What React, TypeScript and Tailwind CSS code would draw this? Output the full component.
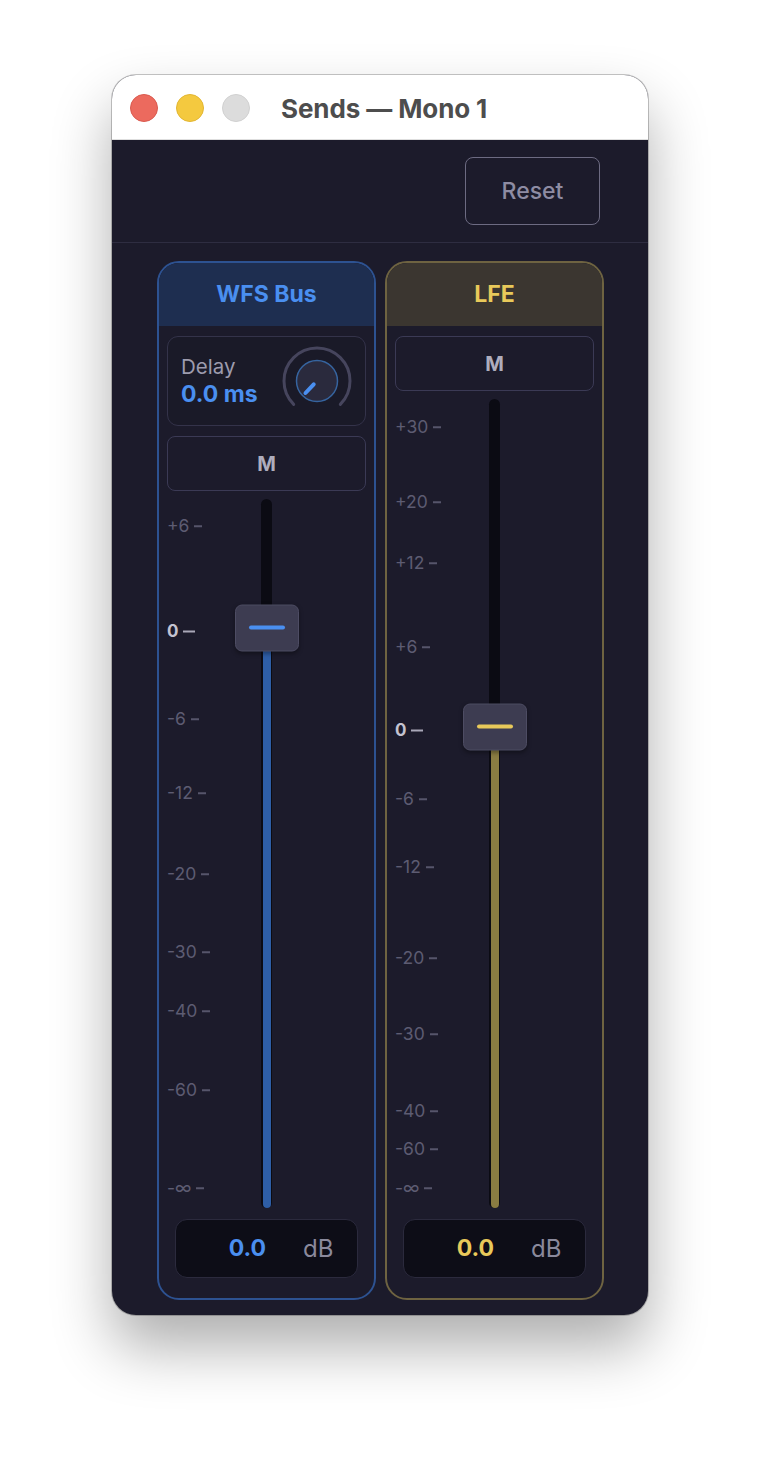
import React from "react";

type Mark = { t: string; y: number; zero?: boolean };

const leftMarks: Mark[] = [
  { t: "+6", y: 525 },
  { t: "0", y: 630, zero: true },
  { t: "-6", y: 718 },
  { t: "-12", y: 792 },
  { t: "-20", y: 873 },
  { t: "-30", y: 951 },
  { t: "-40", y: 1010 },
  { t: "-60", y: 1089 },
  { t: "-∞", y: 1187 },
];

const rightMarks: Mark[] = [
  { t: "+30", y: 426 },
  { t: "+20", y: 501 },
  { t: "+12", y: 562 },
  { t: "+6", y: 646 },
  { t: "0", y: 729, zero: true },
  { t: "-6", y: 798 },
  { t: "-12", y: 866 },
  { t: "-20", y: 957 },
  { t: "-30", y: 1033 },
  { t: "-40", y: 1110 },
  { t: "-60", y: 1148 },
  { t: "-∞", y: 1187 },
];

function Knob() {
  return (
    <svg width="72" height="72" viewBox="0 0 72 72">
      <path
        d="M 12.67 59.33 A 33 33 0 1 1 59.33 59.33"
        fill="none"
        stroke="#46455d"
        strokeWidth="3"
        strokeLinecap="round"
      />
      <circle cx="36" cy="36" r="20.5" fill="#2a2a3d" stroke="#36649f" strokeWidth="1.5" />
      <line x1="32.7" y1="39.3" x2="24.5" y2="48" stroke="#4a8ff0" strokeWidth="4" strokeLinecap="round" />
    </svg>
  );
}

function Fader({
  marks,
  areaTop,
  thumbCenter,
  fill,
  accent,
}: {
  marks: Mark[];
  areaTop: number;
  thumbCenter: number;
  fill: string;
  accent: string;
}) {
  return (
    <div className="relative flex-1 flex justify-center pt-[8px] pb-[11px]">
      {marks.map((m) => (
        <div
          key={m.t}
          className="absolute left-0 -translate-y-1/2 flex items-center leading-none"
          style={{ top: m.y - areaTop }}
        >
          {m.zero ? (
            <>
              <span className="text-[17px] font-bold text-[#c4c3d0]">{m.t}</span>
              <span className="ml-[5px] w-[12px] h-[2px] bg-[#a9a8b8]" />
            </>
          ) : (
            <>
              <span className="text-[17.5px] text-[#5d5c72]">{m.t}</span>
              <span className="ml-[5px] w-[8px] h-[1.5px] bg-[#56556b]" />
            </>
          )}
        </div>
      ))}
      <div className="relative w-[11px] h-full rounded-full bg-[#0b0b13]">
        <div
          className={`absolute left-1/2 -translate-x-1/2 bottom-0 w-[8px] rounded-full ${fill}`}
          style={{ top: thumbCenter }}
        />
        <div
          className="absolute left-1/2 -translate-x-1/2 -translate-y-1/2 w-[64px] h-[47px] rounded-[7px] bg-[#3d3c51] border border-[#4d4c63] flex items-center justify-center shadow-[0_2px_4px_rgba(0,0,0,0.35)]"
          style={{ top: thumbCenter }}
        >
          <div className={`w-[36px] h-[4px] rounded-full ${accent}`} />
        </div>
      </div>
    </div>
  );
}

function ValueBox({ color }: { color: string }) {
  return (
    <div className="mx-[8px] h-[59px] rounded-[12px] bg-[#0d0d17] border border-[#2b2a3d] flex items-center">
      <span className={`w-[90px] text-right text-[23px] font-bold ${color}`}>0.0</span>
      <span className="ml-[37px] text-[24px] text-[#8a899c]">dB</span>
    </div>
  );
}

function MuteButton() {
  return (
    <div className="h-[55px] rounded-[8px] border border-[#3b3a55] flex items-center justify-center text-[20px] font-bold text-[#aeadbd]">
      M
    </div>
  );
}

export default function App() {
  return (
    <div className="w-[760px] h-[1464px] bg-white pt-[75px] pl-[112px] font-[Inter,'Noto_Sans',sans-serif]">
      <div className="w-[536px] h-[1240px] rounded-[24px] overflow-hidden flex flex-col bg-[#1c1b2b] shadow-[0_0_0_1px_rgba(0,0,0,0.22),0_32px_60px_rgba(0,0,0,0.32)]">
        {/* Title bar */}
        <div className="h-[65px] shrink-0 bg-white border-b border-[#dedede] flex items-center pl-[18px] pt-[2px]">
          <div className="w-[28px] h-[28px] rounded-full bg-[#ec6a5e] border border-[#d95a4f]" />
          <div className="ml-[18px] w-[28px] h-[28px] rounded-full bg-[#f4c93f] border border-[#e2b632]" />
          <div className="ml-[18px] w-[28px] h-[28px] rounded-full bg-[#dcdcdc] border border-[#d0d0d0]" />
          <div className="ml-[31px] text-[26px] font-bold text-[#4d4d4d] tracking-[-0.1px]">Sends — Mono 1</div>
        </div>

        {/* Toolbar */}
        <div className="h-[103px] shrink-0 border-b border-[#2e2d41] flex items-center justify-end pr-[48px]">
          <button className="w-[135px] h-[68px] rounded-[8px] border-[1.5px] border-[#6d6b82] text-[23px] font-medium text-[#8e8ca3]">
            Reset
          </button>
        </div>

        {/* Panels */}
        <div className="flex-1 grid grid-cols-[219px_219px] gap-[9px] pl-[45px] pt-[18px] pb-[15px]">
          {/* WFS Bus */}
          <div className="rounded-[22px] border-2 border-[#2d5291] overflow-hidden flex flex-col bg-[#1c1b2b]">
            <div className="h-[63px] shrink-0 bg-[#1e2e50] flex items-center justify-center text-[23px] font-bold text-[#4a8ff0]">
              WFS Bus
            </div>
            <div className="flex-1 flex flex-col px-[8px] pt-[10px] pb-[20px]">
              <div className="h-[90px] rounded-[11px] border border-[#34334a] bg-[#1a1a28] flex items-center justify-between pl-[13px] pr-[12px]">
                <div className="flex flex-col">
                  <span className="text-[20.5px] leading-[27px] text-[#9d9cae]">Delay</span>
                  <span className="text-[23px] leading-[29px] font-bold text-[#4a8ff0]">0.0 ms</span>
                </div>
                <Knob />
              </div>
              <div className="mt-[10px]">
                <MuteButton />
              </div>
              <Fader
                marks={leftMarks}
                areaTop={490}
                thumbCenter={128.5}
                fill="bg-[#2e5ea6]"
                accent="bg-[#4a8ff0]"
              />
              <ValueBox color="text-[#4a8ff0]" />
            </div>
          </div>

          {/* LFE */}
          <div className="rounded-[22px] border-2 border-[#6e6341] overflow-hidden flex flex-col bg-[#1c1b2b]">
            <div className="h-[63px] shrink-0 bg-[#3b3630] flex items-center justify-center text-[23px] font-bold text-[#e8c95a]">
              LFE
            </div>
            <div className="flex-1 flex flex-col px-[8px] pt-[10px] pb-[20px]">
              <MuteButton />
              <Fader
                marks={rightMarks}
                areaTop={390}
                thumbCenter={327.5}
                fill="bg-[#8a7c42]"
                accent="bg-[#e8c95a]"
              />
              <ValueBox color="text-[#e8c95a]" />
            </div>
          </div>
        </div>
      </div>
    </div>
  );
}
